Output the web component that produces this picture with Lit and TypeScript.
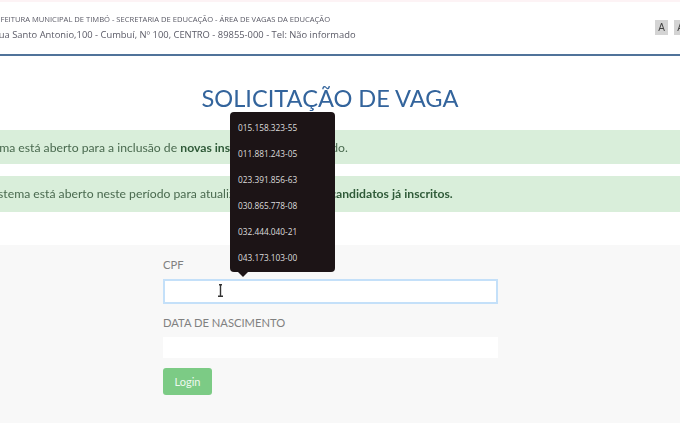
import { LitElement, html, css } from "lit";
import { customElement } from "lit/decorators.js";

@customElement("app-root")
export class AppRoot extends LitElement {
  static styles = css`
    :host { display: block; width: 680px; height: 430px; overflow: hidden; background: #fff; font-family: Lato, "Liberation Sans", sans-serif; color: #555; }
    .page { position: relative; height: 430px; display: flex; flex-direction: column; filter: blur(0.6px); }
    header { box-sizing: border-box; border-top: 2px solid #fdf3f5; border-bottom: 2px solid #50739a; display: flex; justify-content: space-between; flex: none; height: 56px; }
    .hdr-text { display: flex; flex-direction: column; gap: 6px; padding-top: 13px; line-height: 9px; white-space: nowrap; color: #5a5a66; font-family: "Open Sans", sans-serif; }
    .hdr-text .l1 { margin-left: -13px; font-size: 7.6px; }
    .hdr-text .l2 { margin-left: -7px; font-size: 9.4px; }
    .sizes { display: flex; gap: 6px; padding-top: 18px; margin-right: -7px; }
    .sizes span { width: 13px; height: 15px; background: #d4d4d4; color: #444; font: 10px/15px "Liberation Sans", sans-serif; text-align: center; }
    h1 { margin: 26px 0 0; height: 48px; font-size: 23.6px; line-height: 32px; font-weight: 400; color: #33649c; text-align: center; padding-right: 20px; }
    .alert { background: #d9eeda; color: #4a6a4f; font-size: 12.2px; white-space: nowrap; display: flex; align-items: center; overflow: hidden; }
    .alert span { margin-left: -38px; }
    .alert b { color: #2f5a38; }
    .a1 { height: 34px; }
    .a2 { height: 36px; margin-top: 12px; }
    .a2 span { margin-left: -23px; margin-top: -2px; }
    .panel { margin-top: 33px; height: 178px; background: #f8f8f8; padding: 13px 182px 0 163px; box-sizing: border-box; flex: none; }
    label { display: block; font-size: 11.2px; line-height: 14px; color: #808080; height: 21px; }
    .input { height: 25px; background: #fff; box-sizing: border-box; position: relative; margin-bottom: 12px; }
    .focus { border: 2px solid #c4e0f9; }
    .plain { height: 21px; margin-bottom: 10px; }
    .cursor { position: absolute; left: 51px; top: 3px; width: 9px; height: 13px; }
    .btn { width: 49px; height: 27px; border-radius: 3px; background: #7ccb85; color: #eef8ef; font-size: 11px; display: flex; align-items: center; justify-content: center; }
    .tip { position: absolute; left: 230px; top: 112px; width: 105px; height: 160px; box-sizing: border-box; padding: 3px 0 2px 8px; background: #1c1416; border-radius: 4px; color: #ddd; font-size: 8.3px; font-family: "Open Sans", sans-serif; display: flex; flex-direction: column; justify-content: space-around; }
    .tip::after { content: ""; position: absolute; left: 8px; top: 100%; border: 5px solid transparent; border-top-color: #1c1416; border-bottom: 0; }
  `;

  render() {
    const cpfs = ["015.158.323-55", "011.881.243-05", "023.391.856-63", "030.865.778-08", "032.444.040-21", "043.173.103-00"];
    return html`
      <div class="page">
        <header>
          <div class="hdr-text">
            <div class="l1">PREFEITURA MUNICIPAL DE TIMBÓ - SECRETARIA DE EDUCAÇÃO - ÁREA DE VAGAS DA EDUCAÇÃO</div>
            <div class="l2">Rua Santo Antonio,100 - Cumbuí, Nº 100, CENTRO - 89855-000 - Tel: Não informado</div>
          </div>
          <div class="sizes"><span>A</span><span>A</span></div>
        </header>
        <h1>SOLICITAÇÃO DE VAGA</h1>
        <div class="alert a1"><span>O sistema está aberto para a inclusão de <b>novas inscrições</b> neste período.</span></div>
        <div class="alert a2"><span>O sistema está aberto neste período para atualização de dados de <b>candidatos já inscritos.</b></span></div>
        <div class="panel">
          <label>CPF</label>
          <div class="input focus">
            <svg class="cursor" viewBox="0 0 9 13"><path d="M4.5 1v11M2 12.2h5M3 .8h3" stroke="#333" stroke-width="1.4" fill="none"/></svg>
          </div>
          <label>DATA DE NASCIMENTO</label>
          <div class="input plain"></div>
          <div class="btn">Login</div>
        </div>
        <div class="tip">${cpfs.map((c) => html`<div>${c}</div>`)}</div>
      </div>
    `;
  }
}
